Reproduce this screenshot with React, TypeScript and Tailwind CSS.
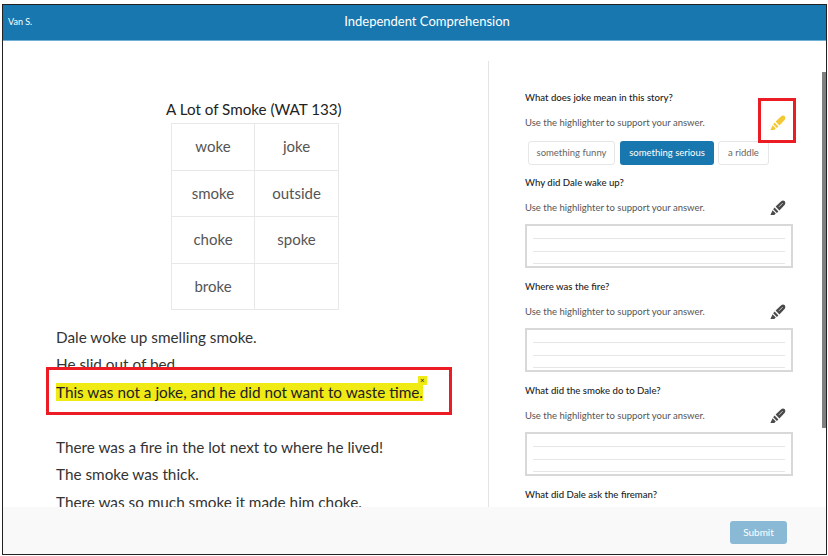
const WORDS = ["woke", "joke", "smoke", "outside", "choke", "spoke", "broke", ""]

const QUESTIONS = ["Why did Dale wake up?", "Where was the fire?", "What did the smoke do to Dale?"]

function HighlighterIcon({ active = false }: { active?: boolean }) {
  return (
    <svg viewBox="0 0 16 16" className={`h-[16px] w-[16px] ${active ? "text-[#f2c935]" : "text-[#4a4a4a]"}`} fill="currentColor">
      <path d="M5.6 6.6 11.2 1.2Q13 0 14.8 1.2 16 3 14.8 4.8L9.4 10.4Z" />
      <path d="M4.6 7.6 8.4 11.4 6.8 13 3.2 9.2Z" />
      <path d="M2.6 10.2 5.8 13.4 4.2 15H.4Z" />
      {!active && <path d="M9 6.8 12.6 3.2" stroke="#fff" strokeWidth="0.7" fill="none" />}
    </svg>
  )
}

function HighlighterRow({ active = false }: { active?: boolean }) {
  return (
    <div className="mt-[10px] flex h-[16px] items-center justify-between pr-[7px]">
      <span className="text-[9.5px] text-[#555]">Use the highlighter to support your answer.</span>
      <HighlighterIcon active={active} />
    </div>
  )
}

function Question({ text }: { text: string }) {
  return <div className="h-[14px] text-[9.6px] leading-[14px] font-medium text-[#222]">{text}</div>
}

function AnswerBox() {
  return (
    <div className="mt-[8px] mb-[12px] h-[44px] border-2 border-[#d8d8d8] bg-white px-[6px]">
      <div className="h-[13px] border-b border-[#e6e6e6]" />
      <div className="h-[13px] border-b border-[#e6e6e6]" />
      <div className="h-[12px] border-b border-[#e6e6e6]" />
    </div>
  )
}

export default function App() {
  return (
    <div
      className="relative h-[556px] w-[828px] overflow-hidden bg-white pt-[4px] pr-[1px] pb-[1px] pl-[2px]"
      style={{ fontFamily: "Lato, 'Open Sans', sans-serif" }}
    >
      <div className="flex h-full flex-col border border-[#222]">
        {/* Header */}
        <div className="relative flex h-[36px] shrink-0 items-center justify-center border-b border-[#6fb0d4] bg-[#1777ae] pb-[2px] text-white">
          <span className="absolute left-[5px] text-[9px]">Van S.</span>
          <span className="pl-[25px] text-[13px]">Independent Comprehension</span>
        </div>

        {/* Passage + questions */}
        <div className="flex min-h-0 flex-1 overflow-hidden">
          <div className="mt-[20px] w-[486px] shrink-0 border-r border-[#e4e4e4]">
            <div className="pt-[35px] pb-[1px] pl-[163px] text-[15.2px] leading-[26px] text-[#222]">A Lot of Smoke (WAT 133)</div>
            <div className="ml-[168px] grid w-[168px] grid-cols-[83px_84px] border-t border-l border-[#e8e8e8] text-[15px] text-[#555]">
              {WORDS.map((word, i) => (
                <div key={i} className="flex h-[46.5px] items-center justify-center border-r border-b border-[#e8e8e8] pb-[1px]">
                  {word}
                </div>
              ))}
            </div>
            <div className="mt-[13.5px] pl-[53px] text-[15.3px] leading-[27.5px] text-[#333]">
              <p>Dale woke up smelling smoke.</p>
              <p>He slid out of bed.</p>
              <p>
                <span className="relative bg-[#f0ea15] text-[#222]">
                  This was not a joke, and he did not want to waste time.
                  <span className="absolute -top-[7px] -right-[4px] flex h-[9px] w-[9px] items-center justify-center bg-[#f0ea15] text-[8px] leading-none">
                    ×
                  </span>
                </span>
              </p>
              <p className="mt-[27.5px]">There was a fire in the lot next to where he lived!</p>
              <p>The smoke was thick.</p>
              <p>There was so much smoke it made him choke.</p>
            </div>
          </div>

          <div className="mt-[20px] min-w-0 flex-1 pl-[36px]">
            <div className="w-[268px] pt-[30px]">
              <Question text="What does joke mean in this story?" />
              <HighlighterRow active />
              <div className="mt-[10px] mb-[11px] ml-[3px] flex h-[24px] text-[9.5px]">
                <div className="flex w-[87px] items-center justify-center rounded-[3px] border border-[#e6e6e6] text-[#666]">something funny</div>
                <div className="ml-[5px] flex w-[94px] items-center justify-center rounded-[3px] bg-[#1777ae] text-white">something serious</div>
                <div className="ml-[4px] flex w-[51px] items-center justify-center rounded-[3px] border border-[#e6e6e6] text-[#666]">a riddle</div>
              </div>
              {QUESTIONS.map((q) => (
                <div key={q}>
                  <Question text={q} />
                  <HighlighterRow />
                  <AnswerBox />
                </div>
              ))}
              <Question text="What did Dale ask the fireman?" />
            </div>
          </div>

          <div className="mt-[31px] h-[356px] w-[4px] shrink-0 self-start bg-[#808080]" />
        </div>

        {/* Footer */}
        <div className="flex h-[47px] shrink-0 justify-end bg-[#f9f9f9] pt-[14px] pr-[39px]">
          <div className="flex h-[23px] w-[57px] items-center justify-center rounded-[3px] bg-[#8ab9d6] text-[10px] text-white">Submit</div>
        </div>
      </div>

      {/* Red annotation boxes */}
      <div className="absolute top-[367px] left-[46px] h-[48px] w-[406px] border-[3px] border-[#ec1c24]" />
      <div className="absolute top-[98px] left-[758px] h-[45px] w-[38px] border-[3px] border-[#ec1c24]" />
    </div>
  )
}
